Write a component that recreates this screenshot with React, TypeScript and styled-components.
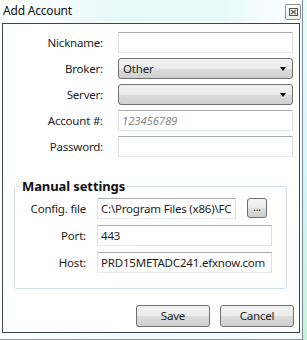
import styled, { createGlobalStyle } from "styled-components";

const GlobalStyle = createGlobalStyle`
  html, body {
    margin: 0;
    padding: 0;
  }
  body {
    width: 307px;
    height: 340px;
    overflow: hidden;
    background: linear-gradient(180deg, #e9fbfd 0%, #d6f3f7 60%, #c8f0dc 100%);
    font-family: "Noto Sans", "Open Sans", sans-serif;
    font-size: 11.5px;
    letter-spacing: -0.2px;
    color: #1e1e1e;
  }
`;

const Window = styled.div`
  box-sizing: border-box;
  width: 303px;
  height: 340px;
  border-right: 1px solid #7f8b92;
  border-bottom: 1px solid #8c969c;
  background: linear-gradient(90deg, #fbfeff 0%, #eefafc 45%, #f6fdfe 100%);
  display: flex;
  flex-direction: column;
`;

const TitleBar = styled.div`
  height: 23px;
  display: flex;
  align-items: flex-start;
  justify-content: space-between;
  padding: 0 1px 0 3px;
  background: linear-gradient(90deg, #ffffff 0%, #e8f8fb 40%, #eafafc 75%, #ffffff 100%);
`;

const Title = styled.span`
  font-size: 12px;
  line-height: 22px;
  color: #111;
`;

const CloseBox = styled.div`
  box-sizing: border-box;
  width: 16px;
  height: 16px;
  margin-top: 4px;
  border: 1px solid #8d8d8d;
  border-radius: 2px;
  background: linear-gradient(180deg, #fdfdfd, #eef1f2);
  display: flex;
  align-items: center;
  justify-content: center;
`;

const Panel = styled.div`
  box-sizing: border-box;
  margin-left: 2px;
  width: 298px;
  height: 310px;
  border: 1px solid #3e4449;
  background: #fff;
  display: flex;
  flex-direction: column;
`;

const Form = styled.div`
  display: grid;
  grid-template-columns: 100px 175px;
  column-gap: 15px;
  row-gap: 5px;
  padding-top: 8px;
`;

const Label = styled.label`
  text-align: right;
  align-self: center;
  line-height: 16px;
  white-space: nowrap;
`;

const TextBox = styled.div<{ $w?: number; $italic?: boolean }>`
  box-sizing: border-box;
  height: 21px;
  width: ${(p) => (p.$w ? `${p.$w}px` : "auto")};
  border: 1px solid;
  border-color: #abadb3 #dbdfe6 #e3e9ef #e2e3ea;
  background: #fff;
  padding: 0 3px;
  line-height: 19px;
  white-space: nowrap;
  overflow: hidden;
  font-style: ${(p) => (p.$italic ? "italic" : "normal")};
  color: ${(p) => (p.$italic ? "#8a8a8a" : "#1e1e1e")};
`;

const Combo = styled.div`
  box-sizing: border-box;
  height: 21px;
  border: 1px solid #707070;
  border-radius: 3px;
  background: linear-gradient(180deg, #f2f2f2 0%, #ebebeb 50%, #dddddd 50%, #cfcfcf 100%);
  display: flex;
  align-items: center;
  justify-content: space-between;
  padding: 0 6px 0 4px;
  line-height: 19px;
`;

const Arrow = styled.span`
  width: 0;
  height: 0;
  border-left: 3.5px solid transparent;
  border-right: 3.5px solid transparent;
  border-top: 4px solid #000;
`;

const Group = styled.fieldset`
  box-sizing: border-box;
  margin: 21px 0 0 11px;
  width: 273px;
  height: 111px;
  padding: 4px 0 0 0;
  border: 1px solid #d5dfe5;
  border-radius: 3px;
`;

const Legend = styled.legend`
  margin-left: 5px;
  padding: 0 2px;
  font-size: 13px;
  font-weight: bold;
  letter-spacing: -0.1px;
  line-height: 16px;
  color: #111;
`;

const GroupGrid = styled.div`
  display: grid;
  grid-template-columns: 71px 175px;
  column-gap: 11px;
  grid-template-rows: 21px 21px 21px;
  row-gap: 6px;
  align-items: start;
`;

const ConfigRow = styled.div`
  display: flex;
  gap: 11px;
  align-items: flex-start;
`;

const PushButton = styled.button<{ $w: number; $h: number }>`
  box-sizing: border-box;
  width: ${(p) => p.$w}px;
  height: ${(p) => p.$h}px;
  padding: 0;
  border: 1px solid #707070;
  border-radius: 3px;
  background: linear-gradient(180deg, #f2f2f2 0%, #ebebeb 50%, #dddddd 50%, #cfcfcf 100%);
  font-family: inherit;
  font-size: 11.5px;
  letter-spacing: -0.2px;
  color: #1e1e1e;
  line-height: 18px;
`;

const Dots = styled.span`
  font-size: 10px;
  position: relative;
  top: -1px;
`;

const Buttons = styled.div`
  display: flex;
  justify-content: flex-end;
  gap: 10px;
  padding: 16px 5px 0 0;
`;

export default function App() {
  return (
    <>
      <GlobalStyle />
      <Window>
        <TitleBar>
          <Title>Add Account</Title>
          <CloseBox>
            <svg width="9" height="8" viewBox="0 0 9 8">
              <rect x="0.5" y="0.5" width="8" height="7" fill="none" stroke="#555" />
              <path d="M2 2 L7 6 M7 2 L2 6" stroke="#555" strokeWidth="1.2" />
            </svg>
          </CloseBox>
        </TitleBar>
        <Panel>
          <Form>
            <Label>Nickname:</Label>
            <TextBox />
            <Label>Broker:</Label>
            <Combo>
              <span>Other</span>
              <Arrow />
            </Combo>
            <Label>Server:</Label>
            <Combo>
              <span />
              <Arrow />
            </Combo>
            <Label>Account #:</Label>
            <TextBox $italic>123456789</TextBox>
            <Label>Password:</Label>
            <TextBox />
          </Form>
          <Group>
            <Legend>Manual settings</Legend>
            <GroupGrid>
              <Label>Config. file</Label>
              <ConfigRow>
                <TextBox $w={139}>C:\Program Files (x86)\FC</TextBox>
                <PushButton $w={20} $h={20}>
                  <Dots>...</Dots>
                </PushButton>
              </ConfigRow>
              <Label>Port:</Label>
              <TextBox>443</TextBox>
              <Label>Host:</Label>
              <TextBox>PRD15METADC241.efxnow.com</TextBox>
            </GroupGrid>
          </Group>
          <Buttons>
            <PushButton $w={74} $h={22}>Save</PushButton>
            <PushButton $w={74} $h={22}>Cancel</PushButton>
          </Buttons>
        </Panel>
      </Window>
    </>
  );
}
